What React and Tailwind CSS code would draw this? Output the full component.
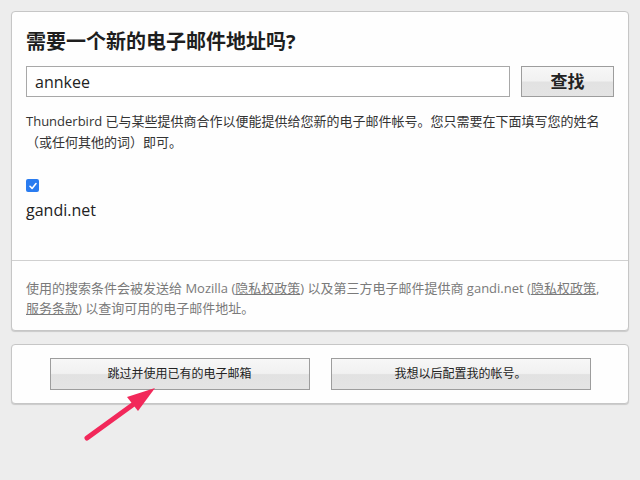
import React from "react";

const font = { fontFamily: '"Open Sans", "Noto Sans CJK SC", sans-serif' };

const btn =
  "border border-[#9d9d9d] bg-[linear-gradient(to_bottom,#f7f7f7_0%,#f1f1f1_48%,#e2e2e2_52%,#e4e4e4_100%)] text-[#222]";

const Arrow = () => (
  <svg
    className="absolute left-0 top-0 pointer-events-none"
    width="640"
    height="480"
    viewBox="0 0 640 480"
  >
    <line
      x1="87"
      y1="438"
      x2="138"
      y2="401"
      stroke="#f2285a"
      strokeWidth="5"
      strokeLinecap="round"
    />
    <polygon points="155,388 127,397 138,411" fill="#f2285a" />
  </svg>
);

export default function App() {
  return (
    <div
      className="relative w-[640px] h-[480px] bg-[#ededed] p-[11px] overflow-hidden"
      style={font}
    >
      {/* Main panel */}
      <div className="w-[618px] bg-[#fefefe] border border-[#c6c6c6] rounded-[4px] shadow-[0_1px_1px_rgba(0,0,0,0.15)]">
        <div className="px-[14px] pt-[16px] pb-[39px]">
          <h1 className="text-[20px] leading-[28px] font-bold text-[#1e1e1e]">
            需要一个新的电子邮件地址吗?
          </h1>
          <div className="mt-[10px] flex items-center gap-[11px]">
            <div className="w-[485px] h-[31px] border border-[#a8a8a8] bg-white flex items-center px-[8px] text-[16px] text-[#222]">
              annkee
            </div>
            <button
              className={`${btn} w-[93px] h-[31px] text-[17px] font-bold flex items-center justify-center`}
            >
              查找
            </button>
          </div>
          <p className="mt-[14px] text-[13px] leading-[21px] text-[#333] w-[590px]">
            Thunderbird 已与某些提供商合作以便能提供给您新的电子邮件帐号。您只需要在下面填写您的姓名（或任何其他的词）即可。
          </p>
          <div className="mt-[26px] w-[13px] h-[13px] rounded-[2px] bg-[#2a7cf0] flex items-center justify-center">
            <svg width="10" height="10" viewBox="0 0 10 10">
              <path
                d="M2 5.3 L4.1 7.4 L8 2.6"
                fill="none"
                stroke="#fff"
                strokeWidth="1.6"
                strokeLinecap="round"
                strokeLinejoin="round"
              />
            </svg>
          </div>
          <div className="mt-[7px] text-[16px] leading-[22px] text-[#222]">
            gandi.net
          </div>
        </div>
        <div className="border-t border-[#d0d0d0] px-[14px] pt-[17px] pb-[12px] text-[13px] leading-[20px] text-[#7a7a7a]">
          使用的搜索条件会被发送给 Mozilla (<span className="underline">隐私权政策</span>) 以及第三方电子邮件提供商 gandi.net (
          <span className="underline">隐私权政策</span>,{" "}
          <span className="underline">服务条款</span>) 以查询可用的电子邮件地址。
        </div>
      </div>

      {/* Bottom panel */}
      <div className="mt-[13px] w-[618px] bg-[#fefefe] border border-[#c6c6c6] rounded-[4px] shadow-[0_1px_1px_rgba(0,0,0,0.15)] py-[13px] flex justify-center gap-[21px]">
        <button
          className={`${btn} w-[260px] h-[32px] text-[12px] font-normal flex items-center justify-center`}
        >
          跳过并使用已有的电子邮箱
        </button>
        <button
          className={`${btn} w-[260px] h-[32px] text-[12px] font-normal flex items-center justify-center`}
        >
          我想以后配置我的帐号。
        </button>
      </div>

      <Arrow />
    </div>
  );
}
